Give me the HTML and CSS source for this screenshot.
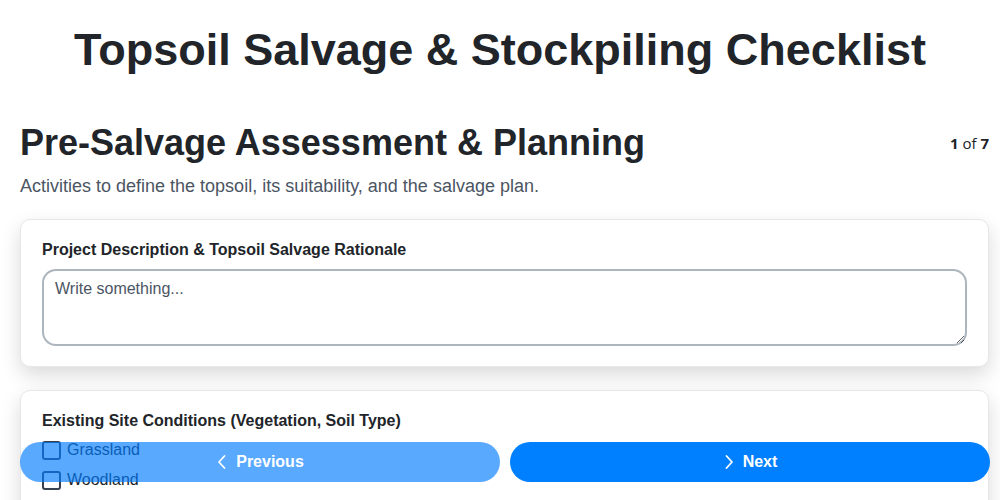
FILE: index.html
```html
<!DOCTYPE html>
<html>
<head>
<meta charset="utf-8">
<link rel="stylesheet" href="styles.css">
</head>
<body>
<h1 class="page-title">Topsoil Salvage &amp; Stockpiling Checklist</h1>
<main class="content">
  <div class="section-head">
    <h2 class="section-title">Pre-Salvage Assessment &amp; Planning</h2>
    <div class="step"><b>1</b> of <b>7</b></div>
  </div>
  <p class="section-desc">Activities to define the topsoil, its suitability, and the salvage plan.</p>

  <div class="card">
    <label class="field-label">Project Description &amp; Topsoil Salvage Rationale</label>
    <textarea class="field-text" placeholder="Write something..."></textarea>
  </div>

  <div class="card">
    <label class="field-label">Existing Site Conditions (Vegetation, Soil Type)</label>
    <div class="checks">
      <label class="check"><span class="box"></span>Grassland</label>
      <label class="check"><span class="box"></span>Woodland</label>
      <label class="check"><span class="box"></span>Agricultural</label>
      <label class="check"><span class="box"></span>Wetland</label>
    </div>
  </div>
</main>

<nav class="footer-nav">
  <button class="btn btn-prev" disabled>
    <svg width="12" height="16" viewBox="0 0 12 16"><path d="M8.5 2 L3 8 L8.5 14" fill="none" stroke="#fff" stroke-width="1.8" stroke-linecap="round" stroke-linejoin="round"/></svg>
    Previous
  </button>
  <button class="btn btn-next">
    <svg width="12" height="16" viewBox="0 0 12 16"><path d="M3.5 2 L9 8 L3.5 14" fill="none" stroke="#fff" stroke-width="1.8" stroke-linecap="round" stroke-linejoin="round"/></svg>
    Next
  </button>
</nav>
</body>
</html>
```
FILE: styles.css
```css
* { box-sizing: border-box; }
html, body { margin: 0; padding: 0; background: #fff; }
body {
  font-family: "Liberation Sans", Arial, sans-serif;
  color: #212529;
}
.page-title {
  margin: 0;
  padding-top: 24px;
  text-align: center;
  font-size: 45px;
  line-height: 52px;
  font-weight: 700;
  color: #212529;
}
.content {
  padding: 0 11px 120px 20px;
}
.section-head {
  display: flex;
  justify-content: space-between;
  align-items: center;
  margin-top: 45px;
}
.section-title {
  margin: 0;
  font-size: 36px;
  line-height: 44px;
  font-weight: 700;
}
.step {
  font-family: "Open Sans", "Noto Sans", sans-serif;
  font-size: 15px;
  color: #212529;
}
.step b { font-weight: 700; }
.section-desc {
  margin: 9px 0 21px;
  font-size: 18px;
  line-height: 24px;
  color: #4b5563;
}
.card {
  background: #fff;
  border: 1px solid #e5e7eb;
  border-radius: 10px;
  box-shadow: 0 8px 20px rgba(0, 0, 0, 0.15);
  padding: 20px 21px 20px;
  margin-bottom: 23px;
}
.field-label {
  display: block;
  font-size: 16px;
  font-weight: 700;
  line-height: 20px;
  margin-bottom: 9px;
}
.field-text {
  display: block;
  width: 100%;
  height: 77px;
  border: 2px solid #adb5bd;
  border-radius: 14px;
  padding: 9px 11px;
  font-family: "Liberation Sans", Arial, sans-serif;
  font-size: 16px;
  color: #212529;
  resize: vertical;
}
.field-text::placeholder { color: #4b5563; }
.checks { display: flex; flex-direction: column; gap: 10px; }
.check {
  display: flex;
  align-items: center;
  gap: 6px;
  font-size: 16px;
  line-height: 20px;
}
.box {
  width: 19px;
  height: 19px;
  border: 2px solid #374151;
  border-radius: 3px;
  background: #fff;
}
.footer-nav {
  position: fixed;
  left: 20px;
  right: 10px;
  bottom: 18px;
  display: flex;
  gap: 10px;
}
.btn {
  flex: 1;
  height: 40px;
  border: none;
  border-radius: 20px;
  background: #007bff;
  color: #fff;
  font-family: "Liberation Sans", Arial, sans-serif;
  font-size: 16px;
  font-weight: 700;
  display: flex;
  align-items: center;
  justify-content: center;
  gap: 8px;
}
.btn-prev { opacity: 0.65; }
.btn-next { background: #0080ff; }
```
